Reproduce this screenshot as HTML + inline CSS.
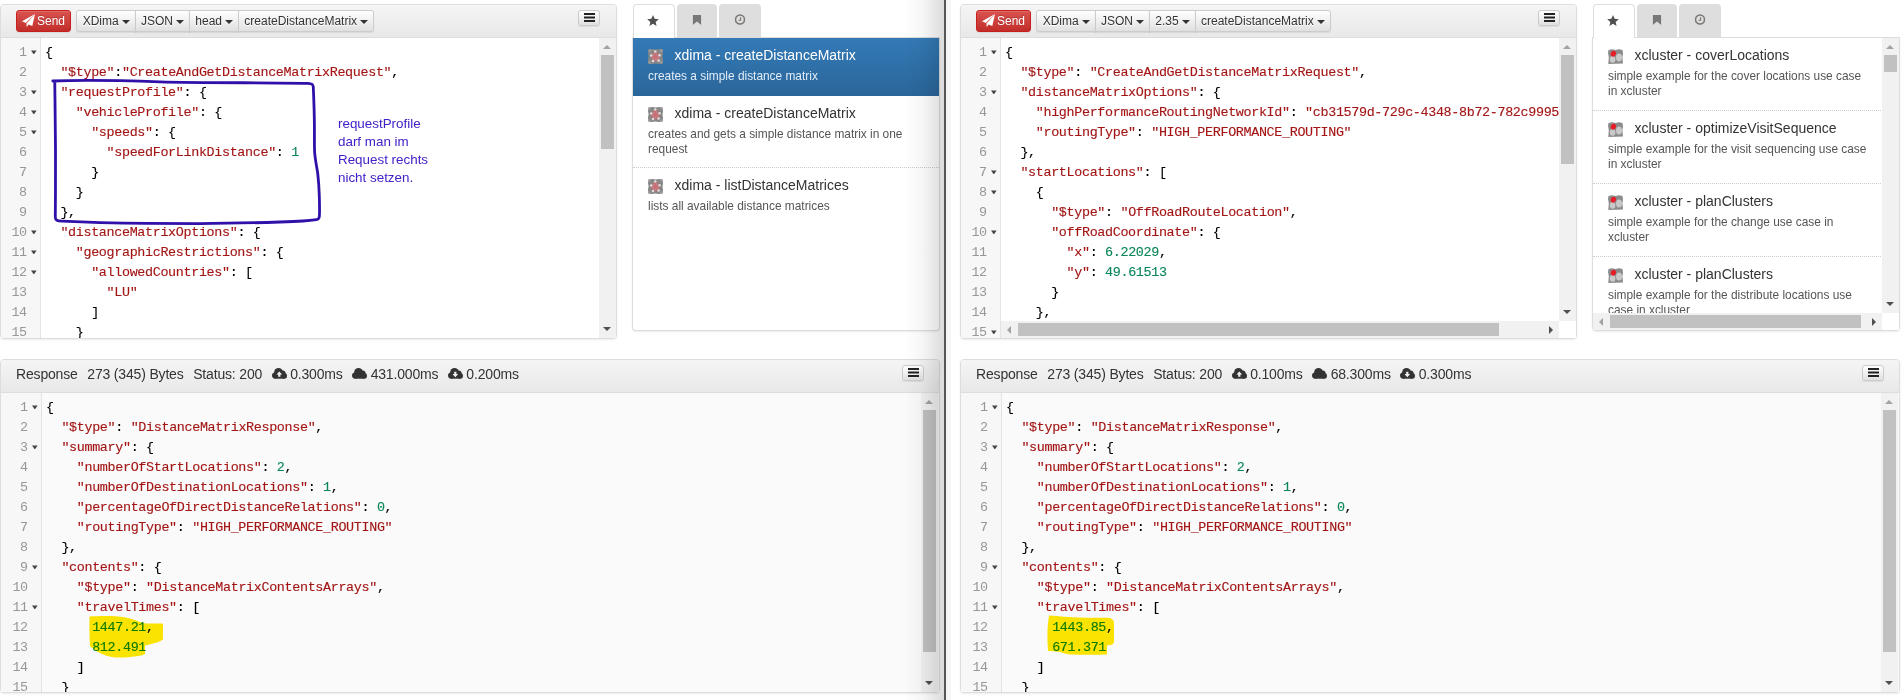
<!DOCTYPE html>
<html lang="en"><head><meta charset="utf-8"><title>Request Runner</title>
<style>
*{box-sizing:border-box}
html,body{margin:0;padding:0}
body{width:1903px;height:700px;overflow:hidden;background:#fff;position:relative;font-family:"Liberation Sans",sans-serif;font-size:14px;color:#333}
.panel{position:absolute;border:1px solid #ddd;border-radius:4px;background:#fff;box-shadow:0 1px 2px rgba(0,0,0,.08)}
.ph{position:absolute;left:0;top:0;right:0;height:33px;border-bottom:1px solid #ddd;background:linear-gradient(#f5f5f5,#e8e8e8);border-radius:3px 3px 0 0}
.ed{position:absolute;overflow:hidden;font-family:"Liberation Mono","DejaVu Sans Mono",monospace;font-size:13.4px;letter-spacing:-0.341px;color:#000}
.gut{position:absolute;left:0;top:0;width:40px;background:#f7f7f7;border-right:1px solid #e3e3e3}
.ln{position:absolute;left:0;height:20px;line-height:20px;white-space:pre;width:3000px}
.no{position:absolute;left:0;width:25.8px;text-align:right;color:#979797}
.fa{position:absolute;left:30px;top:7.8px;width:5.6px;height:4px;background:#444;clip-path:polygon(0 0,100% 0,50% 100%)}
.cd{position:absolute;left:44px;-webkit-text-stroke:0.12px}
.ed.r .cd{left:45px}
.ed.r .gut{width:41px}
.ed.r .no{width:26.8px}
.ed.r .fa{left:31px}
.s{color:#a31515}
.n{color:#098658}
.vs{position:absolute;width:17px}
.vs b{position:absolute;left:2px;width:13px;background:#c1c1c1}
.hs{position:absolute;height:17px;background:#f1f1f1}
.hs b{position:absolute;top:2px;height:13px;background:#c1c1c1}
.au,.ad,.al,.ar{position:absolute;width:0;height:0}
.au{left:4px;top:7px;border-left:4px solid transparent;border-right:4px solid transparent;border-bottom:4px solid #a3a3a3}
.ad{left:4px;bottom:7px;border-left:4px solid transparent;border-right:4px solid transparent;border-top:4px solid #505050}
.al{left:6px;top:4.5px;border-top:4px solid transparent;border-bottom:4px solid transparent;border-right:4px solid #a3a3a3}
.ar{right:6px;top:4.5px;border-top:4px solid transparent;border-bottom:4px solid transparent;border-left:4px solid #505050}
.tb{position:absolute;top:10px;height:22px;white-space:nowrap;font-size:12px}
.btn{display:inline-block;vertical-align:top;height:22px;line-height:18px;padding:1px 5px;border:1px solid #ccc;border-radius:3px;font-size:12px;color:#333;background:linear-gradient(#fff,#e0e0e0);text-shadow:0 1px 0 #fff;box-shadow:inset 0 1px 0 rgba(255,255,255,.15),0 1px 1px rgba(0,0,0,.075)}
.send{color:#fff;background:linear-gradient(#d9534f,#c12e2a);border-color:#c71f1c;text-shadow:0 -1px 0 rgba(0,0,0,.2);margin-right:4.6px}
.send .ic{vertical-align:-2px;margin-right:2px}
.grp{display:inline-block;vertical-align:top}
.grp .btn{border-radius:0;margin-left:-1px}
.grp .btn:first-child{border-radius:3px 0 0 3px;margin-left:0;padding-left:6px}
.grp .btn:last-child{border-radius:0 3px 3px 0}
.caret{display:inline-block;width:0;height:0;margin-left:0;vertical-align:middle;border-top:4px solid #333;border-left:4px solid transparent;border-right:4px solid transparent}
.hb{position:absolute;padding:0;width:22px;height:15.5px;line-height:12px;text-align:center}
.hb svg{margin-top:2.2px}
.rh{position:absolute;height:33px;line-height:29px;font-size:14px;letter-spacing:-0.17px;color:#333;white-space:nowrap;padding-left:15px}
.rh .g{margin-left:9.6px}
.rh .hb{right:15px;top:5px}
.ci{vertical-align:0px;margin-right:3.4px}
.tabs{position:absolute;top:4px;height:34px;width:308px;border-bottom:1px solid #ddd}
.tab{position:absolute;top:0;height:33px;border-radius:4px 4px 0 0;background:#dedede;text-align:center;line-height:0}
.tab svg{position:absolute;left:50%;transform:translateX(-50%)}
.tab.act{background:#fff;height:34px;border:1px solid #ddd;border-bottom:none}
.list{position:absolute;border:1px solid #ddd;border-top:none;border-radius:0 0 4px 4px;background:#fff;overflow:hidden;box-shadow:0 1px 2px rgba(0,0,0,.08)}
.it{position:relative;padding:9px 15px 0 15px;border-bottom:1px dotted #ccc;overflow:hidden}
.it.on{background:linear-gradient(#337ab7,#2b669a);color:#fff;border-bottom:1px solid #2b669a}
.it .li{position:absolute;left:15px;top:11px}
.it .t{display:block;margin-left:26.5px;font-size:14px;line-height:16px;color:#333;white-space:nowrap}
.it.on .t{color:#fff}
.it .d{font-size:11.9px;line-height:15.5px;color:#555;margin-top:5.5px}
.it.on .d{color:#e1edf7}
.it.last{border-bottom:none}
.note{position:absolute;left:338px;top:114.8px;font-size:13.4px;line-height:18px;color:#4320c8;white-space:pre}
</style></head>
<body>
<div style="position:absolute;left:946px;top:0;width:5px;height:700px;background:#f6f6f6"></div>
<div class="panel" style="left:0;top:4px;width:617px;height:335px"><div class="ph"></div></div>
<div class="tb" style="left:16px"><span class="btn send"><svg class="ic" width="13" height="13" viewBox="0 0 13 13"><path d="M13 0L0 7.2L3.7 8.9Z M13 0L4.5 9.5L4.6 13L6.7 10.5L10.3 12Z" fill="#fff"/></svg>Send</span><span class="grp"><span class="btn">XDima <i class="caret"></i></span><span class="btn">JSON <i class="caret"></i></span><span class="btn">head <i class="caret"></i></span><span class="btn">createDistanceMatrix <i class="caret"></i></span></span></div>
<span class="btn hb" style="left:578px;top:10px"><svg width="11" height="9" viewBox="0 0 11 9"><path d="M0 0h11v2H0zM0 3.5h11v2H0zM0 7h11v2H0z" fill="#222"/></svg></span>
<div class="ed" style="left:1px;top:38px;width:598px;height:300px;background:#fff">
<div class="gut" style="height:300px"></div>
<div class="ln" style="top:4.6px"><span class="no">1</span><i class="fa"></i><span class="cd">{</span></div>
<div class="ln" style="top:24.6px"><span class="no">2</span><span class="cd">  <span class="s">"$type"</span>:<span class="s">"CreateAndGetDistanceMatrixRequest"</span>,</span></div>
<div class="ln" style="top:44.6px"><span class="no">3</span><i class="fa"></i><span class="cd">  <span class="s">"requestProfile"</span>: {</span></div>
<div class="ln" style="top:64.6px"><span class="no">4</span><i class="fa"></i><span class="cd">    <span class="s">"vehicleProfile"</span>: {</span></div>
<div class="ln" style="top:84.6px"><span class="no">5</span><i class="fa"></i><span class="cd">      <span class="s">"speeds"</span>: {</span></div>
<div class="ln" style="top:104.6px"><span class="no">6</span><span class="cd">        <span class="s">"speedForLinkDistance"</span>: <span class="n">1</span></span></div>
<div class="ln" style="top:124.6px"><span class="no">7</span><span class="cd">      }</span></div>
<div class="ln" style="top:144.6px"><span class="no">8</span><span class="cd">    }</span></div>
<div class="ln" style="top:164.6px"><span class="no">9</span><span class="cd">  },</span></div>
<div class="ln" style="top:184.6px"><span class="no">10</span><i class="fa"></i><span class="cd">  <span class="s">"distanceMatrixOptions"</span>: {</span></div>
<div class="ln" style="top:204.6px"><span class="no">11</span><i class="fa"></i><span class="cd">    <span class="s">"geographicRestrictions"</span>: {</span></div>
<div class="ln" style="top:224.6px"><span class="no">12</span><i class="fa"></i><span class="cd">      <span class="s">"allowedCountries"</span>: [</span></div>
<div class="ln" style="top:244.6px"><span class="no">13</span><span class="cd">        <span class="s">"LU"</span></span></div>
<div class="ln" style="top:264.6px"><span class="no">14</span><span class="cd">      ]</span></div>
<div class="ln" style="top:284.6px"><span class="no">15</span><span class="cd">    }</span></div>
</div>
<div class="vs" style="left:599px;top:38px;height:300px;background:#f1f1f1"><i class="au"></i><i class="ad"></i><b style="top:17px;height:94px"></b></div>
<div class="tabs" style="left:632px"><span class="tab act" style="left:0.6px;width:42px"><svg style="top:9.6px;margin-left:-0.4px" width="12.2" height="11.2" viewBox="0 0 12 11"><path d="M6 0L7.6 3.7L11.7 4.1L8.6 6.8L9.5 10.8L6 8.7L2.5 10.8L3.4 6.8L0.3 4.1L4.4 3.7Z" fill="#505050"/></svg></span><span class="tab" style="left:45px;width:40px"><svg style="top:10.9px" width="9" height="10" viewBox="0 0 9 10"><path d="M0.3 0H8.7V10L4.5 6.6L0.3 10Z" fill="#777"/></svg></span><span class="tab" style="left:87px;width:42px"><svg style="top:10.4px" width="11" height="11" viewBox="0 0 11 11"><circle cx="5.5" cy="5.5" r="4.5" fill="none" stroke="#7a7672" stroke-width="1.5"/><path d="M6.1 3.2V6.2H4" fill="none" stroke="#7a7672" stroke-width="1.1"/></svg></span></div>
<div class="list" style="left:632px;top:38px;width:308px;height:293px"><div class="it on" style="height:58px"><svg class="li" width="15" height="15" viewBox="0 0 15 15"><path d="M0.6 0.4L4.5 0L7.5 0.6L11 0L14.6 0.6L15 4.5L14.5 7.5L15 11L14.5 14.6L10.5 15L7.5 14.5L4 15L0.4 14.6L0 10.5L0.6 7.5L0 4Z" fill="#878787"/><path d="M0.6 0.4L3 0.2L2.6 2.4L0.3 2.8ZM12 0.2L14.6 0.6L14.8 3L12.4 2.4ZM0.2 12L2.6 12.4L3 14.8L0.4 14.6ZM12.4 12.4L14.8 12L14.5 14.6L12 14.8Z" fill="#9c9c9c"/><path d="M7.3 2.6L11.6 6.2L10.6 11.6L5 12L3.2 6.6Z" fill="#d98088" fill-opacity="0.6"/><path d="M7.3 2.6L11.6 6.2L10.6 11.6L5 12L3.2 6.6ZM7.3 2.6L7.6 7.8L10.6 11.6M3.2 6.6L7.6 7.8L11.6 6.2M5 12L7.6 7.8" stroke="#e25560" stroke-width="0.6" fill="none"/><circle cx="7.3" cy="2.6" r="1.25" fill="#dedede"/><circle cx="11.6" cy="6.2" r="1.25" fill="#dedede"/><circle cx="10.6" cy="11.6" r="1.25" fill="#dedede"/><circle cx="5" cy="12" r="1.25" fill="#dedede"/><circle cx="3.2" cy="6.6" r="1.25" fill="#dedede"/></svg><span class="t">xdima - createDistanceMatrix</span><div class="d">creates a simple distance matrix</div></div><div class="it" style="height:72px"><svg class="li" width="15" height="15" viewBox="0 0 15 15"><path d="M0.6 0.4L4.5 0L7.5 0.6L11 0L14.6 0.6L15 4.5L14.5 7.5L15 11L14.5 14.6L10.5 15L7.5 14.5L4 15L0.4 14.6L0 10.5L0.6 7.5L0 4Z" fill="#878787"/><path d="M0.6 0.4L3 0.2L2.6 2.4L0.3 2.8ZM12 0.2L14.6 0.6L14.8 3L12.4 2.4ZM0.2 12L2.6 12.4L3 14.8L0.4 14.6ZM12.4 12.4L14.8 12L14.5 14.6L12 14.8Z" fill="#9c9c9c"/><path d="M7.3 2.6L11.6 6.2L10.6 11.6L5 12L3.2 6.6Z" fill="#d98088" fill-opacity="0.6"/><path d="M7.3 2.6L11.6 6.2L10.6 11.6L5 12L3.2 6.6ZM7.3 2.6L7.6 7.8L10.6 11.6M3.2 6.6L7.6 7.8L11.6 6.2M5 12L7.6 7.8" stroke="#e25560" stroke-width="0.6" fill="none"/><circle cx="7.3" cy="2.6" r="1.25" fill="#dedede"/><circle cx="11.6" cy="6.2" r="1.25" fill="#dedede"/><circle cx="10.6" cy="11.6" r="1.25" fill="#dedede"/><circle cx="5" cy="12" r="1.25" fill="#dedede"/><circle cx="3.2" cy="6.6" r="1.25" fill="#dedede"/></svg><span class="t">xdima - createDistanceMatrix</span><div class="d">creates and gets a simple distance matrix in one<br>request</div></div><div class="it last" style="height:60px"><svg class="li" width="15" height="15" viewBox="0 0 15 15"><path d="M0.6 0.4L4.5 0L7.5 0.6L11 0L14.6 0.6L15 4.5L14.5 7.5L15 11L14.5 14.6L10.5 15L7.5 14.5L4 15L0.4 14.6L0 10.5L0.6 7.5L0 4Z" fill="#878787"/><path d="M0.6 0.4L3 0.2L2.6 2.4L0.3 2.8ZM12 0.2L14.6 0.6L14.8 3L12.4 2.4ZM0.2 12L2.6 12.4L3 14.8L0.4 14.6ZM12.4 12.4L14.8 12L14.5 14.6L12 14.8Z" fill="#9c9c9c"/><path d="M7.3 2.6L11.6 6.2L10.6 11.6L5 12L3.2 6.6Z" fill="#d98088" fill-opacity="0.6"/><path d="M7.3 2.6L11.6 6.2L10.6 11.6L5 12L3.2 6.6ZM7.3 2.6L7.6 7.8L10.6 11.6M3.2 6.6L7.6 7.8L11.6 6.2M5 12L7.6 7.8" stroke="#e25560" stroke-width="0.6" fill="none"/><circle cx="7.3" cy="2.6" r="1.25" fill="#dedede"/><circle cx="11.6" cy="6.2" r="1.25" fill="#dedede"/><circle cx="10.6" cy="11.6" r="1.25" fill="#dedede"/><circle cx="5" cy="12" r="1.25" fill="#dedede"/><circle cx="3.2" cy="6.6" r="1.25" fill="#dedede"/></svg><span class="t">xdima - listDistanceMatrices</span><div class="d">lists all available distance matrices</div></div></div>
<div class="panel" style="left:0;top:359px;width:940px;height:334px"><div class="ph" style="height:33px"></div></div>
<div class="rh" style="left:1px;top:360px;width:938px"><span>Response</span><span class="g">273 (345) Bytes</span><span class="g">Status: 200</span><span class="g"><svg class="ci" width="15" height="10.7" viewBox="0 0 15 10.7"><g fill="#333"><circle cx="3.1" cy="7.6" r="3.1"/><circle cx="6.5" cy="4.4" r="4.4"/><circle cx="10.7" cy="5.4" r="2.9"/><circle cx="12.2" cy="7.9" r="2.8"/><rect x="3.1" y="6" width="9.1" height="4.7"/></g><path d="M7.3 3.4L4.4 6.5H6.2V8.8H8.4V6.5H10.2Z" fill="#f0f0f0"/></svg>0.300ms</span><span class="g"><svg class="ci" width="15" height="10.7" viewBox="0 0 15 10.7"><g fill="#333"><circle cx="3.1" cy="7.6" r="3.1"/><circle cx="6.5" cy="4.4" r="4.4"/><circle cx="10.7" cy="5.4" r="2.9"/><circle cx="12.2" cy="7.9" r="2.8"/><rect x="3.1" y="6" width="9.1" height="4.7"/></g></svg>431.000ms</span><span class="g"><svg class="ci" width="15" height="10.7" viewBox="0 0 15 10.7"><g fill="#333"><circle cx="3.1" cy="7.6" r="3.1"/><circle cx="6.5" cy="4.4" r="4.4"/><circle cx="10.7" cy="5.4" r="2.9"/><circle cx="12.2" cy="7.9" r="2.8"/><rect x="3.1" y="6" width="9.1" height="4.7"/></g><path d="M7.3 9.2L4.4 6.1H6.2V3.8H8.4V6.1H10.2Z" fill="#f0f0f0"/></svg>0.200ms</span><span class="btn hb"><svg width="11" height="9" viewBox="0 0 11 9"><path d="M0 0h11v2H0zM0 3.5h11v2H0zM0 7h11v2H0z" fill="#222"/></svg></span></div>
<div class="ed r" style="left:1px;top:393px;width:938px;height:299px;background:#fafafa">
<div class="gut" style="height:299px"></div>
<div class="ln" style="top:4.6px"><span class="no">1</span><i class="fa"></i><span class="cd">{</span></div>
<div class="ln" style="top:24.6px"><span class="no">2</span><span class="cd">  <span class="s">"$type"</span>: <span class="s">"DistanceMatrixResponse"</span>,</span></div>
<div class="ln" style="top:44.6px"><span class="no">3</span><i class="fa"></i><span class="cd">  <span class="s">"summary"</span>: {</span></div>
<div class="ln" style="top:64.6px"><span class="no">4</span><span class="cd">    <span class="s">"numberOfStartLocations"</span>: <span class="n">2</span>,</span></div>
<div class="ln" style="top:84.6px"><span class="no">5</span><span class="cd">    <span class="s">"numberOfDestinationLocations"</span>: <span class="n">1</span>,</span></div>
<div class="ln" style="top:104.6px"><span class="no">6</span><span class="cd">    <span class="s">"percentageOfDirectDistanceRelations"</span>: <span class="n">0</span>,</span></div>
<div class="ln" style="top:124.6px"><span class="no">7</span><span class="cd">    <span class="s">"routingType"</span>: <span class="s">"HIGH_PERFORMANCE_ROUTING"</span></span></div>
<div class="ln" style="top:144.6px"><span class="no">8</span><span class="cd">  },</span></div>
<div class="ln" style="top:164.6px"><span class="no">9</span><i class="fa"></i><span class="cd">  <span class="s">"contents"</span>: {</span></div>
<div class="ln" style="top:184.6px"><span class="no">10</span><span class="cd">    <span class="s">"$type"</span>: <span class="s">"DistanceMatrixContentsArrays"</span>,</span></div>
<div class="ln" style="top:204.6px"><span class="no">11</span><i class="fa"></i><span class="cd">    <span class="s">"travelTimes"</span>: [</span></div>
<div class="ln" style="top:224.6px"><span class="no">12</span><span class="cd">      <span class="n">1447.21</span>,</span></div>
<div class="ln" style="top:244.6px"><span class="no">13</span><span class="cd">      <span class="n">812.491</span></span></div>
<div class="ln" style="top:264.6px"><span class="no">14</span><span class="cd">    ]</span></div>
<div class="ln" style="top:284.6px"><span class="no">15</span><span class="cd">  }</span></div>
</div>
<div class="vs" style="left:921px;top:393px;height:299px;background:#f1f1f1"><i class="au"></i><i class="ad"></i><b style="top:17px;height:242px"></b></div>
<div class="panel" style="left:960px;top:4px;width:617px;height:335px"><div class="ph"></div></div>
<div class="tb" style="left:976px"><span class="btn send"><svg class="ic" width="13" height="13" viewBox="0 0 13 13"><path d="M13 0L0 7.2L3.7 8.9Z M13 0L4.5 9.5L4.6 13L6.7 10.5L10.3 12Z" fill="#fff"/></svg>Send</span><span class="grp"><span class="btn">XDima <i class="caret"></i></span><span class="btn">JSON <i class="caret"></i></span><span class="btn">2.35 <i class="caret"></i></span><span class="btn">createDistanceMatrix <i class="caret"></i></span></span></div>
<span class="btn hb" style="left:1538px;top:10px"><svg width="11" height="9" viewBox="0 0 11 9"><path d="M0 0h11v2H0zM0 3.5h11v2H0zM0 7h11v2H0z" fill="#222"/></svg></span>
<div class="ed" style="left:961px;top:38px;width:598px;height:300px;background:#fff">
<div class="gut" style="height:300px"></div>
<div class="ln" style="top:4.6px"><span class="no">1</span><i class="fa"></i><span class="cd">{</span></div>
<div class="ln" style="top:24.6px"><span class="no">2</span><span class="cd">  <span class="s">"$type"</span>: <span class="s">"CreateAndGetDistanceMatrixRequest"</span>,</span></div>
<div class="ln" style="top:44.6px"><span class="no">3</span><i class="fa"></i><span class="cd">  <span class="s">"distanceMatrixOptions"</span>: {</span></div>
<div class="ln" style="top:64.6px"><span class="no">4</span><span class="cd">    <span class="s">"highPerformanceRoutingNetworkId"</span>: <span class="s">"cb31579d-729c-4348-8b72-782c9995</span></span></div>
<div class="ln" style="top:84.6px"><span class="no">5</span><span class="cd">    <span class="s">"routingType"</span>: <span class="s">"HIGH_PERFORMANCE_ROUTING"</span></span></div>
<div class="ln" style="top:104.6px"><span class="no">6</span><span class="cd">  },</span></div>
<div class="ln" style="top:124.6px"><span class="no">7</span><i class="fa"></i><span class="cd">  <span class="s">"startLocations"</span>: [</span></div>
<div class="ln" style="top:144.6px"><span class="no">8</span><i class="fa"></i><span class="cd">    {</span></div>
<div class="ln" style="top:164.6px"><span class="no">9</span><span class="cd">      <span class="s">"$type"</span>: <span class="s">"OffRoadRouteLocation"</span>,</span></div>
<div class="ln" style="top:184.6px"><span class="no">10</span><i class="fa"></i><span class="cd">      <span class="s">"offRoadCoordinate"</span>: {</span></div>
<div class="ln" style="top:204.6px"><span class="no">11</span><span class="cd">        <span class="s">"x"</span>: <span class="n">6.22029</span>,</span></div>
<div class="ln" style="top:224.6px"><span class="no">12</span><span class="cd">        <span class="s">"y"</span>: <span class="n">49.61513</span></span></div>
<div class="ln" style="top:244.6px"><span class="no">13</span><span class="cd">      }</span></div>
<div class="ln" style="top:264.6px"><span class="no">14</span><span class="cd">    },</span></div>
<div class="ln" style="top:284.6px"><span class="no">15</span><i class="fa"></i><span class="cd"></span></div>
</div>
<div class="vs" style="left:1559px;top:38px;height:283px;background:#f1f1f1"><i class="au"></i><i class="ad"></i><b style="top:17px;height:109px"></b></div>
<div class="hs" style="left:1001px;top:321px;width:558px"><i class="al"></i><i class="ar"></i><b style="left:17px;width:481px"></b></div>
<div style="position:absolute;left:1559px;top:321px;width:17px;height:17px;background:#fff"></div>
<div class="tabs" style="left:1592px"><span class="tab act" style="left:0.6px;width:42px"><svg style="top:9.6px;margin-left:-0.4px" width="12.2" height="11.2" viewBox="0 0 12 11"><path d="M6 0L7.6 3.7L11.7 4.1L8.6 6.8L9.5 10.8L6 8.7L2.5 10.8L3.4 6.8L0.3 4.1L4.4 3.7Z" fill="#505050"/></svg></span><span class="tab" style="left:45px;width:40px"><svg style="top:10.9px" width="9" height="10" viewBox="0 0 9 10"><path d="M0.3 0H8.7V10L4.5 6.6L0.3 10Z" fill="#777"/></svg></span><span class="tab" style="left:87px;width:42px"><svg style="top:10.4px" width="11" height="11" viewBox="0 0 11 11"><circle cx="5.5" cy="5.5" r="4.5" fill="none" stroke="#7a7672" stroke-width="1.5"/><path d="M6.1 3.2V6.2H4" fill="none" stroke="#7a7672" stroke-width="1.1"/></svg></span></div>
<div class="list" style="left:1592px;top:38px;width:308px;height:293px"><div class="it" style="height:73px"><svg class="li" width="15" height="15" viewBox="0 0 15 15"><path d="M0.5 1L4 0.3L7.5 1L11 0.3L14.5 1L15 5L14.4 8L15 14.5L0.3 15L0.8 8L0 4Z" fill="#8b8b8b"/><ellipse cx="11" cy="8.6" rx="3" ry="4" fill="#c9c9c9"/><ellipse cx="4.6" cy="10.4" rx="2.8" ry="3.3" fill="#c9c9c9"/><ellipse cx="5.4" cy="4.7" rx="2.6" ry="3" fill="#e61e28" transform="rotate(20 5.4 4.7)"/></svg><span class="t">xcluster - coverLocations</span><div class="d">simple example for the cover locations use case<br>in xcluster</div></div><div class="it" style="height:73px"><svg class="li" width="15" height="15" viewBox="0 0 15 15"><path d="M0.5 1L4 0.3L7.5 1L11 0.3L14.5 1L15 5L14.4 8L15 14.5L0.3 15L0.8 8L0 4Z" fill="#8b8b8b"/><ellipse cx="11" cy="8.6" rx="3" ry="4" fill="#c9c9c9"/><ellipse cx="4.6" cy="10.4" rx="2.8" ry="3.3" fill="#c9c9c9"/><ellipse cx="5.4" cy="4.7" rx="2.6" ry="3" fill="#e61e28" transform="rotate(20 5.4 4.7)"/></svg><span class="t">xcluster - optimizeVisitSequence</span><div class="d">simple example for the visit sequencing use case<br>in xcluster</div></div><div class="it" style="height:73px"><svg class="li" width="15" height="15" viewBox="0 0 15 15"><path d="M0.5 1L4 0.3L7.5 1L11 0.3L14.5 1L15 5L14.4 8L15 14.5L0.3 15L0.8 8L0 4Z" fill="#8b8b8b"/><ellipse cx="11" cy="8.6" rx="3" ry="4" fill="#c9c9c9"/><ellipse cx="4.6" cy="10.4" rx="2.8" ry="3.3" fill="#c9c9c9"/><ellipse cx="5.4" cy="4.7" rx="2.6" ry="3" fill="#e61e28" transform="rotate(20 5.4 4.7)"/></svg><span class="t">xcluster - planClusters</span><div class="d">simple example for the change use case in<br>xcluster</div></div><div class="it" style="height:73px"><svg class="li" width="15" height="15" viewBox="0 0 15 15"><path d="M0.5 1L4 0.3L7.5 1L11 0.3L14.5 1L15 5L14.4 8L15 14.5L0.3 15L0.8 8L0 4Z" fill="#8b8b8b"/><ellipse cx="11" cy="8.6" rx="3" ry="4" fill="#c9c9c9"/><ellipse cx="4.6" cy="10.4" rx="2.8" ry="3.3" fill="#c9c9c9"/><ellipse cx="5.4" cy="4.7" rx="2.6" ry="3" fill="#e61e28" transform="rotate(20 5.4 4.7)"/></svg><span class="t">xcluster - planClusters</span><div class="d">simple example for the distribute locations use<br>case in xcluster</div></div></div>
<div class="vs" style="left:1882px;top:38px;height:275px;background:#f1f1f1"><i class="au"></i><i class="ad"></i><b style="top:17px;height:17px"></b></div>
<div class="hs" style="left:1593px;top:313px;width:289px"><i class="al"></i><i class="ar"></i><b style="left:17px;width:251px"></b></div>
<div style="position:absolute;left:1882px;top:313px;width:17px;height:17px;background:#fff"></div>
<div class="panel" style="left:960px;top:359px;width:940px;height:334px"><div class="ph" style="height:33px"></div></div>
<div class="rh" style="left:961px;top:360px;width:938px"><span>Response</span><span class="g">273 (345) Bytes</span><span class="g">Status: 200</span><span class="g"><svg class="ci" width="15" height="10.7" viewBox="0 0 15 10.7"><g fill="#333"><circle cx="3.1" cy="7.6" r="3.1"/><circle cx="6.5" cy="4.4" r="4.4"/><circle cx="10.7" cy="5.4" r="2.9"/><circle cx="12.2" cy="7.9" r="2.8"/><rect x="3.1" y="6" width="9.1" height="4.7"/></g><path d="M7.3 3.4L4.4 6.5H6.2V8.8H8.4V6.5H10.2Z" fill="#f0f0f0"/></svg>0.100ms</span><span class="g"><svg class="ci" width="15" height="10.7" viewBox="0 0 15 10.7"><g fill="#333"><circle cx="3.1" cy="7.6" r="3.1"/><circle cx="6.5" cy="4.4" r="4.4"/><circle cx="10.7" cy="5.4" r="2.9"/><circle cx="12.2" cy="7.9" r="2.8"/><rect x="3.1" y="6" width="9.1" height="4.7"/></g></svg>68.300ms</span><span class="g"><svg class="ci" width="15" height="10.7" viewBox="0 0 15 10.7"><g fill="#333"><circle cx="3.1" cy="7.6" r="3.1"/><circle cx="6.5" cy="4.4" r="4.4"/><circle cx="10.7" cy="5.4" r="2.9"/><circle cx="12.2" cy="7.9" r="2.8"/><rect x="3.1" y="6" width="9.1" height="4.7"/></g><path d="M7.3 9.2L4.4 6.1H6.2V3.8H8.4V6.1H10.2Z" fill="#f0f0f0"/></svg>0.300ms</span><span class="btn hb"><svg width="11" height="9" viewBox="0 0 11 9"><path d="M0 0h11v2H0zM0 3.5h11v2H0zM0 7h11v2H0z" fill="#222"/></svg></span></div>
<div class="ed r" style="left:961px;top:393px;width:938px;height:299px;background:#fafafa">
<div class="gut" style="height:299px"></div>
<div class="ln" style="top:4.6px"><span class="no">1</span><i class="fa"></i><span class="cd">{</span></div>
<div class="ln" style="top:24.6px"><span class="no">2</span><span class="cd">  <span class="s">"$type"</span>: <span class="s">"DistanceMatrixResponse"</span>,</span></div>
<div class="ln" style="top:44.6px"><span class="no">3</span><i class="fa"></i><span class="cd">  <span class="s">"summary"</span>: {</span></div>
<div class="ln" style="top:64.6px"><span class="no">4</span><span class="cd">    <span class="s">"numberOfStartLocations"</span>: <span class="n">2</span>,</span></div>
<div class="ln" style="top:84.6px"><span class="no">5</span><span class="cd">    <span class="s">"numberOfDestinationLocations"</span>: <span class="n">1</span>,</span></div>
<div class="ln" style="top:104.6px"><span class="no">6</span><span class="cd">    <span class="s">"percentageOfDirectDistanceRelations"</span>: <span class="n">0</span>,</span></div>
<div class="ln" style="top:124.6px"><span class="no">7</span><span class="cd">    <span class="s">"routingType"</span>: <span class="s">"HIGH_PERFORMANCE_ROUTING"</span></span></div>
<div class="ln" style="top:144.6px"><span class="no">8</span><span class="cd">  },</span></div>
<div class="ln" style="top:164.6px"><span class="no">9</span><i class="fa"></i><span class="cd">  <span class="s">"contents"</span>: {</span></div>
<div class="ln" style="top:184.6px"><span class="no">10</span><span class="cd">    <span class="s">"$type"</span>: <span class="s">"DistanceMatrixContentsArrays"</span>,</span></div>
<div class="ln" style="top:204.6px"><span class="no">11</span><i class="fa"></i><span class="cd">    <span class="s">"travelTimes"</span>: [</span></div>
<div class="ln" style="top:224.6px"><span class="no">12</span><span class="cd">      <span class="n">1443.85</span>,</span></div>
<div class="ln" style="top:244.6px"><span class="no">13</span><span class="cd">      <span class="n">671.371</span></span></div>
<div class="ln" style="top:264.6px"><span class="no">14</span><span class="cd">    ]</span></div>
<div class="ln" style="top:284.6px"><span class="no">15</span><span class="cd">  }</span></div>
</div>
<div class="vs" style="left:1881px;top:393px;height:299px;background:#f1f1f1"><i class="au"></i><i class="ad"></i><b style="top:17px;height:242px"></b></div>
<svg style="position:absolute;left:0;top:0" width="1903" height="700" viewBox="0 0 1903 700"><g fill="#ffe800" style="mix-blend-mode:multiply"><path d="M89.5 616.5C96 616 104 615.8 110 616C118 616.3 124 617.2 130 618.5C137 620.5 141 622.8 147 623.5C152 623.8 158 623.4 163 623.5L163 639.5C160 641.5 158 642.2 155 643C151 644.2 148 645 145 645.5L145 654C141 655.8 136 656.6 130 657C125 657.5 120 657.8 115 657.5C109 656.5 104 655 100 653C96 651 92 648.5 90 646C89.4 636 89.4 626 89.5 616.5Z"/><path d="M1049 615.5C1058 616.2 1070 617.2 1080 617.5C1090 617.8 1100 617.6 1108 617.8C1112 618.2 1114 620 1114 623L1114 642C1113.6 644 1112 645 1110 645L1107 645.5L1107 654.5C1095 654.8 1082 654.8 1070 654.5C1066 654 1063 653 1060 652C1056 651.4 1052 651.2 1048 651C1047.4 644 1047.3 637 1047.5 630C1047.8 625 1048.4 620 1049 615.5Z"/></g><path d="M52.8 81C80 80 120 80.5 160 81.8C200 82.8 260 82.6 308 83.3C311.5 83.4 313.2 84 313.3 87C313.8 100 314.3 110 314.4 125C314.5 135 314.3 143 314.6 152C315.2 160 316.8 167 317.7 173C318.6 181 319.1 188 319.3 196C319.5 202 319.6 208 319.5 214C319.4 218 319 219.3 316.5 219.6C312 220.2 308 220.6 303 221C295 221.6 288 221.8 280 222C250 223 225 223.5 200 223.6C165 223.6 130 223.3 100 222.7C86 222.3 74 221.8 62 221.2C57 221 55.4 220.5 55.3 217C55.5 195 55.6 170 55.5 150C55.4 130 55.2 115 55 100C54.9 94 54.8 88 54.8 81.5" fill="none" stroke="#3010a8" stroke-width="2.8" stroke-linejoin="round" stroke-linecap="round"/></svg>
<div class="note">requestProfile
darf man im
Request rechts
nicht setzen.</div>
<div style="position:absolute;left:904px;top:0;width:40px;height:700px;background:linear-gradient(to right,rgba(0,0,0,0),rgba(0,0,0,.035) 45%,rgba(0,0,0,.14))"></div>
<div style="position:absolute;left:944px;top:0;width:2px;height:700px;background:#555"></div>
</body></html>
